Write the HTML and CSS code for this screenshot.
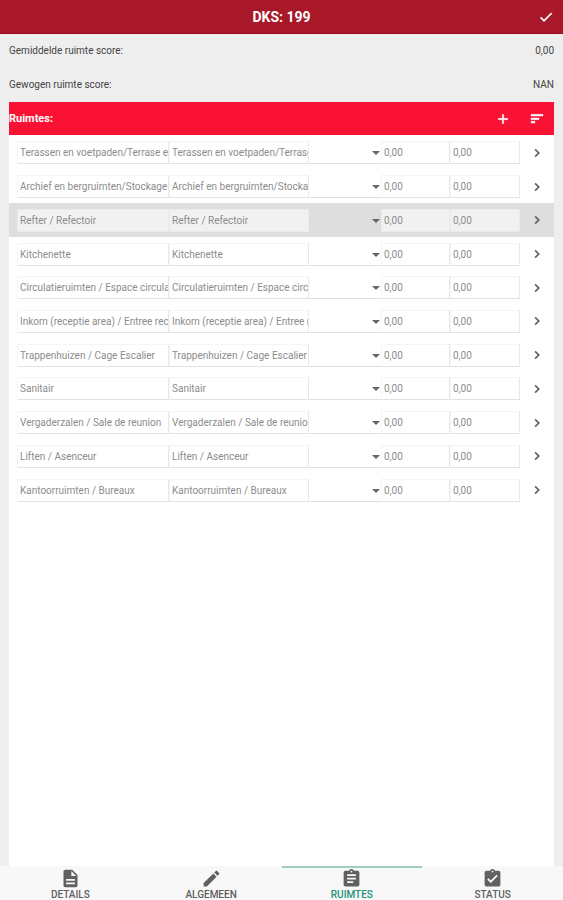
FILE: index.html
```html
<!DOCTYPE html>
<html lang="nl">
<head>
<meta charset="utf-8">
<meta name="viewport" content="width=device-width, initial-scale=1">
<title>DKS: 199</title>
<link rel="stylesheet" href="styles.css">
</head>
<body>
<header class="topbar">
  <h1 class="topbar-title">DKS: 199</h1>
  <button class="icon-button" type="button" aria-label="Opslaan">
    <svg class="icon" viewBox="0 0 24 24"><path d="M9 16.2 4.8 12l-1.4 1.4L9 19 21 7l-1.4-1.4z"/></svg>
  </button>
</header>

<main class="content">
  <dl class="scores">
    <div class="score"><dt>Gemiddelde ruimte score:</dt><dd>0,00</dd></div>
    <div class="score"><dt>Gewogen ruimte score:</dt><dd>NAN</dd></div>
  </dl>
  <section class="rooms">
    <div class="rooms-bar">
      <h2 class="rooms-title">Ruimtes:</h2>
      <button class="icon-button" type="button" aria-label="Toevoegen">
        <svg class="icon" viewBox="0 0 24 24"><path d="M19 13h-6v6h-2v-6H5v-2h6V5h2v6h6z"/></svg>
      </button>
      <button class="icon-button" type="button" aria-label="Sorteren">
        <svg class="icon" viewBox="0 0 24 24"><path d="M3 18h6v-2.500H3zM3 5v2.500h18V5zm0 8h12v-2.500H3z"/></svg>
      </button>
    </div>
    <ul class="room-list" id="rooms"></ul>
  </section>
</main>

<nav class="tabs">
  <a class="tab" href="#details">
    <svg class="tab-icon" viewBox="0 0 24 24"><path d="M14 2H6c-1.100 0-2 .9-2 2v16c0 1.100.9 2 2 2h12c1.100 0 2-.9 2-2V8zm3 16.500H7v-2h10zm0-4H7v-2h10zm-4-5.500V3.500L18.500 9z"/></svg>
    DETAILS
  </a>
  <a class="tab" href="#algemeen">
    <svg class="tab-icon" viewBox="0 0 24 24"><path d="M3 17.250V21h3.750L17.810 9.940l-3.750-3.750zM20.710 7.040a1 1 0 0 0 0-1.410l-2.340-2.340a1 1 0 0 0-1.410 0l-1.830 1.830 3.750 3.750z"/></svg>
    ALGEMEEN
  </a>
  <a class="tab tab-active" href="#ruimtes" aria-current="page">
    <svg class="tab-icon" viewBox="0 0 24 24"><path d="M19 3h-4.180C14.400 1.840 13.300 1 12 1s-2.400.84-2.820 2H5c-1.100 0-2 .9-2 2v14c0 1.100.9 2 2 2h14c1.100 0 2-.9 2-2V5c0-1.100-.9-2-2-2zm-7 0a1 1 0 1 1 0 2 1 1 0 0 1 0-2zm2 14H7v-2h7zm3-4H7v-2h10zm0-4H7V7h10z"/></svg>
    RUIMTES
  </a>
  <a class="tab" href="#status">
    <svg class="tab-icon" viewBox="0 0 24 24"><path d="M19 3h-4.180C14.400 1.840 13.300 1 12 1s-2.400.84-2.820 2H5c-1.100 0-2 .9-2 2v14c0 1.100.9 2 2 2h14c1.100 0 2-.9 2-2V5c0-1.100-.9-2-2-2zm-7 0a1 1 0 1 1 0 2 1 1 0 0 1 0-2zm-2 14-4-4 1.410-1.410L10 14.170l6.590-6.590L18 9z"/></svg>
    STATUS
  </a>
</nav>
<script src="rooms.js"></script>
</body>
</html>
```
FILE: styles.css
```css
* {
  box-sizing: border-box;
}

body {
  margin: 0;
  min-height: 100vh;
  display: flex;
  flex-direction: column;
  background: #eeeeee;
  color: #444444;
  font-family: Roboto, "Liberation Sans", sans-serif;
  font-size: 10px;
  line-height: 14px;
}

.topbar {
  display: grid;
  grid-template-columns: 34px 1fr 34px;
  align-items: center;
  height: 34px;
  background: #a81829;
  border-bottom: 1px solid #9c0c1c;
  color: #ffffff;
}

.topbar-title {
  grid-column: 2;
  margin: 0;
  text-align: center;
  font-size: 14px;
  line-height: 20px;
  font-weight: 700;
}

.icon-button {
  display: flex;
  align-items: center;
  justify-content: center;
  width: 34px;
  height: 32px;
  padding: 0;
  border: 0;
  background: none;
  color: inherit;
}

.icon {
  width: 16px;
  height: 16px;
  fill: currentColor;
  stroke: currentColor;
  stroke-width: 0.6;
}

.content {
  flex: 1;
  display: flex;
  flex-direction: column;
  padding: 0 9px;
}

.scores {
  margin: 0;
}

.score {
  display: flex;
  align-items: center;
  justify-content: space-between;
  height: 34px;
}

.score dd {
  margin: 0;
}

.rooms {
  flex: 1;
  background: #ffffff;
}

.rooms-bar {
  display: flex;
  align-items: center;
  height: 33px;
  background: #f91233;
  color: #ffffff;
}

.rooms-title {
  flex: 1;
  margin: 0;
  font-size: 11px;
  line-height: 14px;
  font-weight: 700;
}

.room-list {
  display: grid;
  grid-auto-rows: 1fr;
  min-height: 372px;
  margin: 0;
  padding: 1px 0 0;
  list-style: none;
}

.room {
  display: grid;
  grid-template-columns: 152fr 140fr 72fr 69fr 70fr 34px;
  align-items: center;
  padding-left: 8px;
}

.room-selected {
  background: #dedede;
}

.field {
  width: 100%;
  min-width: 0;
  height: 23px;
  margin: 0;
  padding: 0 0 0 2px;
  border: 1px solid #f5f5f5;
  border-right-color: #e8e8e8;
  border-bottom-color: #e2e2e2;
  border-radius: 0;
  background: #ffffff;
  color: #8c8c8c;
  font: inherit;
}

.room-selected .field {
  background: #f1f1f1;
  border-color: #eaeaea;
}

.choice {
  position: relative;
}

.choice .field {
  display: block;
  appearance: none;
  border-color: transparent;
  border-bottom-color: #dedede;
  background: none;
}

.room-selected .choice .field {
  border-color: transparent;
  background: none;
}

.choice::after {
  content: "";
  position: absolute;
  right: 1px;
  top: 10px;
  border: 4px solid transparent;
  border-top-color: #666666;
  border-bottom: 0;
  pointer-events: none;
}

.open {
  display: flex;
  align-items: center;
  justify-content: center;
  height: 24px;
  padding: 0;
  border: 0;
  background: none;
  color: #5c5c5c;
}

.tabs {
  display: grid;
  grid-template-columns: repeat(4, 1fr);
  background: #f8f8f8;
}

.tab {
  display: flex;
  flex-direction: column;
  align-items: center;
  height: 34px;
  border-top: 2px solid transparent;
  color: #5f5f5f;
  font-size: 10px;
  line-height: 12px;
  font-weight: 500;
  text-decoration: none;
}

.tab-icon {
  flex: none;
  width: 21px;
  height: 21px;
  fill: #616161;
}

.tab-active {
  border-top-color: #a3cdbf;
  color: #229178;
}
```
FILE: rooms.js
```javascript
const rooms = [
  "Terassen en voetpaden/Terrase et sentiers",
  "Archief en bergruimten/Stockage",
  "Refter / Refectoir",
  "Kitchenette",
  "Circulatieruimten / Espace circulation",
  "Inkom (receptie area) / Entree reception",
  "Trappenhuizen / Cage Escalier",
  "Sanitair",
  "Vergaderzalen / Sale de reunion",
  "Liften / Asenceur",
  "Kantoorruimten / Bureaux"
];
const selected = 2;

document.getElementById("rooms").innerHTML = rooms.map((name, i) => `
  <li class="room${i === selected ? " room-selected" : ""}">
    <input class="field" aria-label="Ruimte" value="${name}" readonly>
    <input class="field" aria-label="Omschrijving" value="${name}" readonly>
    <div class="choice"><select class="field" aria-label="Keuze"><option></option></select></div>
    <input class="field" aria-label="Score" value="0,00" readonly>
    <input class="field" aria-label="Gewogen score" value="0,00" readonly>
    <button class="open" type="button" aria-label="Open ${name}">
      <svg class="icon" viewBox="0 0 24 24"><path d="M8.600 16.600 10 18l6-6-6-6-1.400 1.400 4.600 4.600z"/></svg>
    </button>
  </li>`).join("");
```
